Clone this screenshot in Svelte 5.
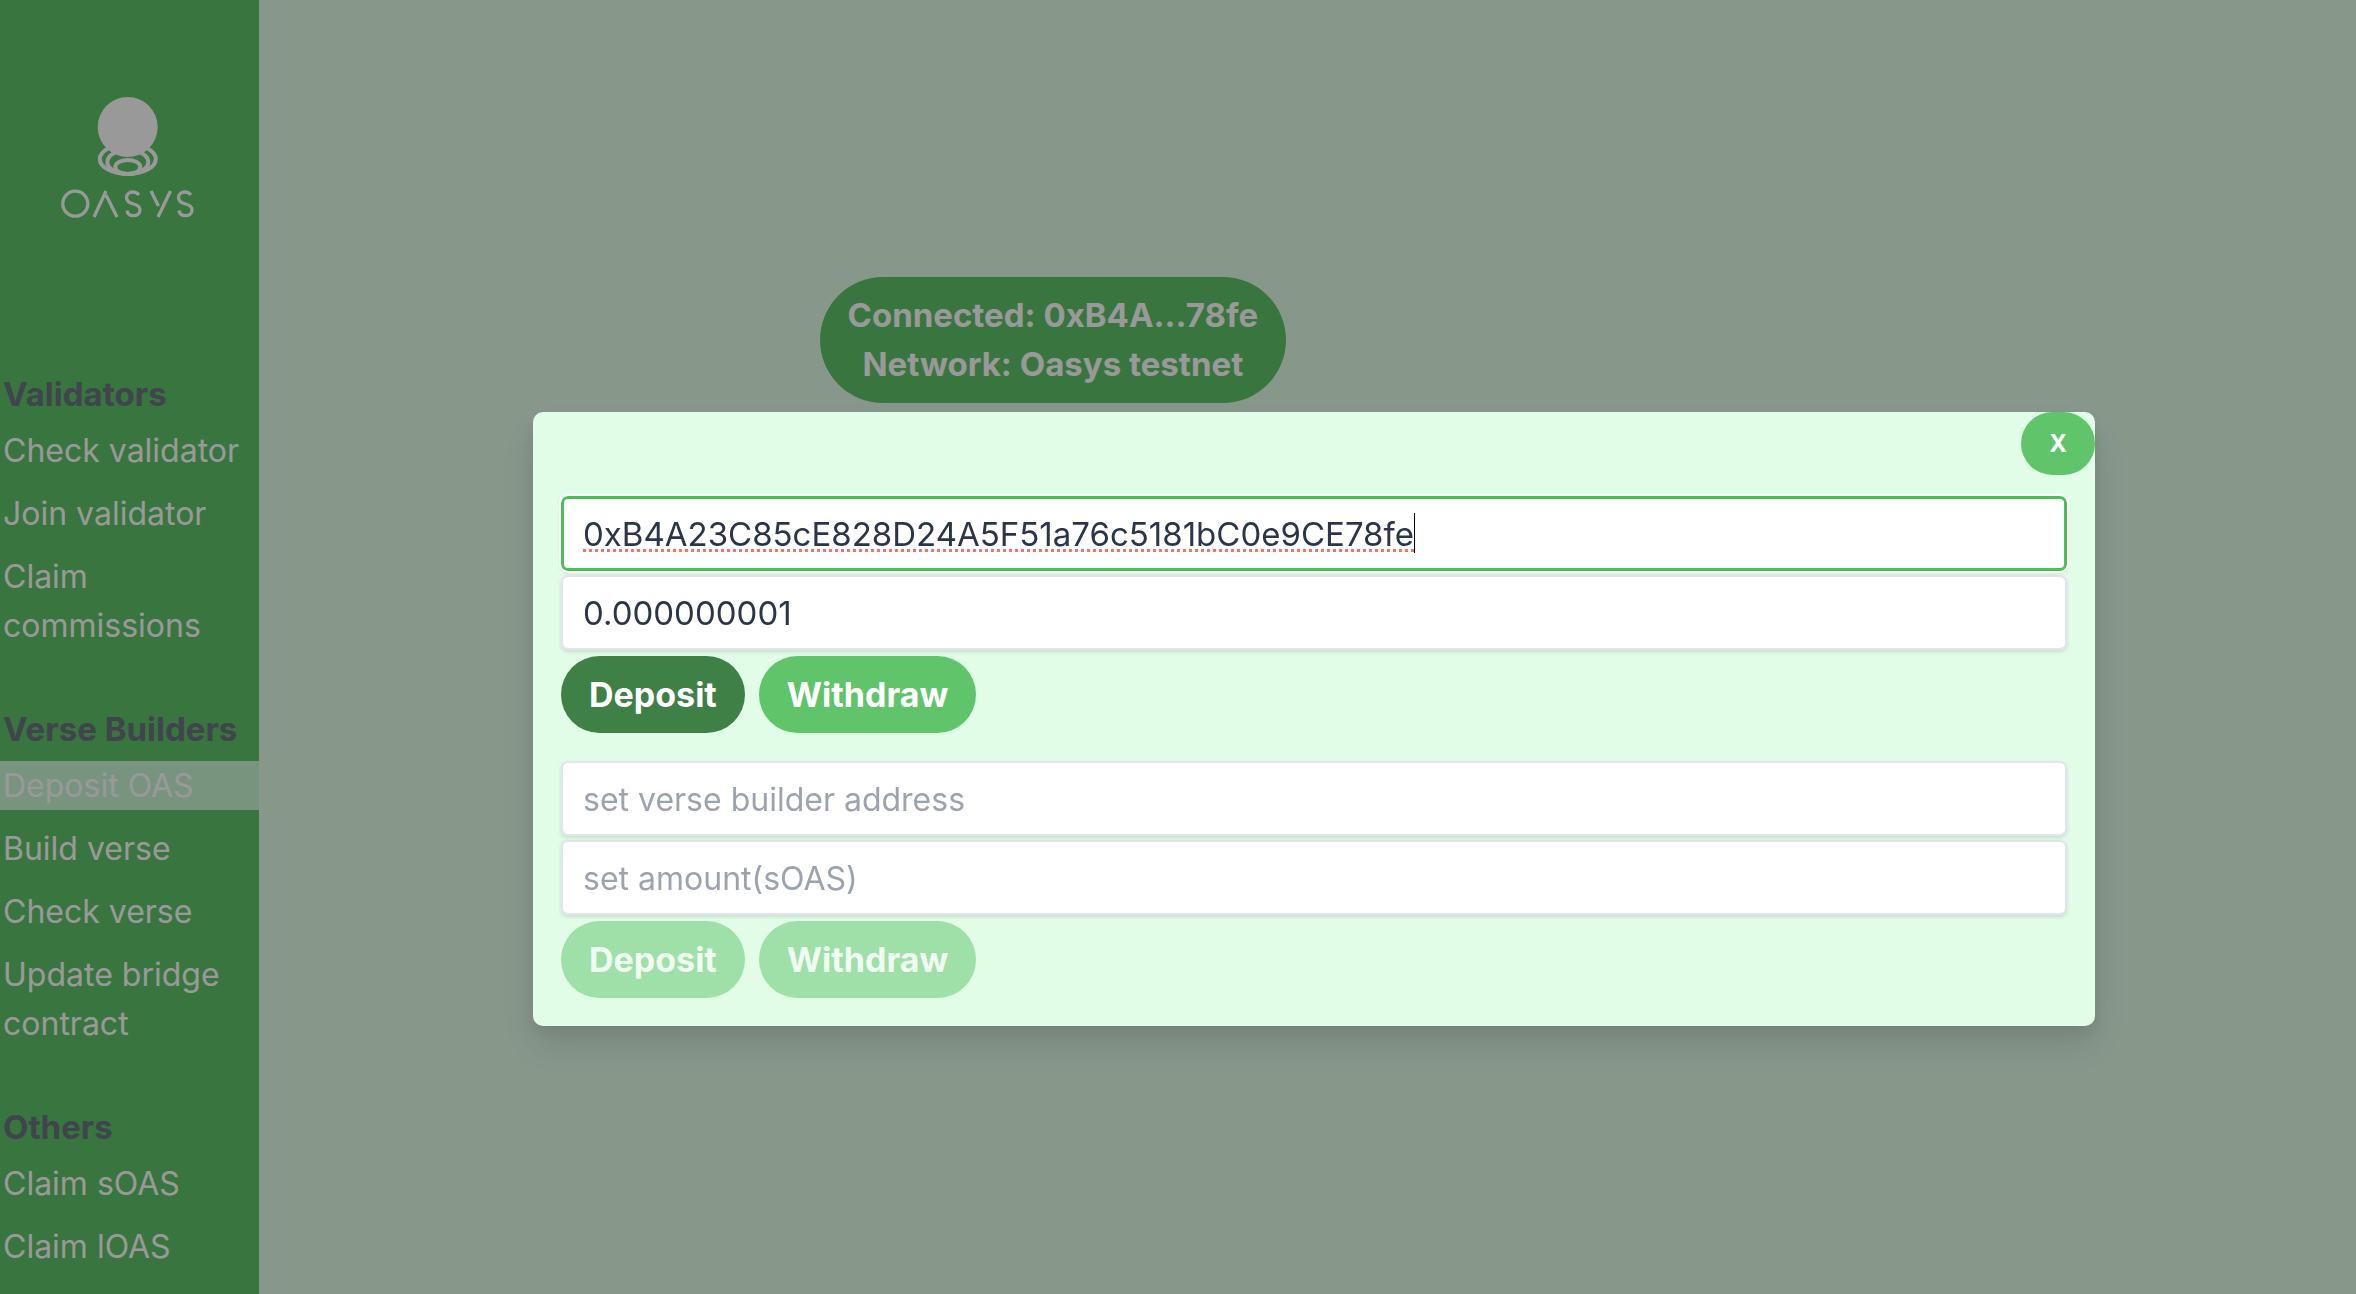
<script lang="ts">
	import { onMount } from 'svelte';

	type MenuItem = { title: string; href: string };
	type MenuGroup = { title: string; items: MenuItem[] };

	const groups: MenuGroup[] = [
		{
			title: 'Validators',
			items: [
				{ title: 'Check validator', href: '#check-validator' },
				{ title: 'Join validator', href: '#join-validator' },
				{ title: 'Claim commissions', href: '#claim-commissions' }
			]
		},
		{
			title: 'Verse Builders',
			items: [
				{ title: 'Deposit OAS', href: '#deposit-oas' },
				{ title: 'Build verse', href: '#build-verse' },
				{ title: 'Check verse', href: '#check-verse' },
				{ title: 'Update bridge contract', href: '#update-bridge' }
			]
		},
		{
			title: 'Others',
			items: [
				{ title: 'Claim sOAS', href: '#claim-soas' },
				{ title: 'Claim lOAS', href: '#claim-loas' }
			]
		}
	];

	let current = $state('#deposit-oas');
	let isOpen = $state(true);
	let forms = $state([
		{ token: 'OAS', builder: '0xB4A23C85cE828D24A5F51a76c5181bC0e9CE78fe', amount: '0.000000001' },
		{ token: 'sOAS', builder: '', amount: '' }
	]);

	let modalElement: HTMLDivElement;
	let focused = $state(-1);
	let caretLeft = $state(0);

	// place the caret bar behind the typed text
	const setCaretPosition = (input: HTMLInputElement) => {
		const context = document.createElement('canvas').getContext('2d');
		if (!context) return;
		const style = getComputedStyle(input);
		context.font = `${style.fontSize} ${style.fontFamily}`;
		const text = input.value.slice(0, input.selectionStart ?? input.value.length);
		caretLeft = Math.round(input.clientLeft + parseInt(style.paddingLeft) + context.measureText(text).width);
	};

	onMount(() => {
		const input = modalElement.querySelector('input');
		if (input) {
			input.focus();
			input.setSelectionRange(input.value.length, input.value.length);
			focused = 0;
			setCaretPosition(input);
		}
	});
</script>

<div class="page">
	<aside class="sidebar">
		<svg class="logo" viewBox="0 0 136 122" role="img" aria-label="Oasys">
			<g fill="none" stroke="currentColor" stroke-width="3.3">
				<circle cx="67.7" cy="30" r="30" fill="currentColor" stroke="none" />
				<ellipse cx="67.8" cy="62" rx="28" ry="15" stroke-width="4" />
				<ellipse cx="67.8" cy="65" rx="20.5" ry="12" stroke-width="4" />
				<ellipse cx="67.8" cy="70" rx="12.5" ry="7" stroke-width="4" />
				<circle cx="15.3" cy="106.7" r="12.5" />
				<path d="M34 120L46 94M46 98L57 120" />
				<path
					d="M79 98C77 95.5 75 95 73 95C69 95 66.5 97.5 66.5 100.5C66.5 104.5 69.5 106 73.5 107C77.5 108 80 109.5 80 113C80 116.5 77 118.7 73.5 118.7C70 118.7 67.5 116.5 67 113.5"
				/>
				<path d="M91 94L98.5 109M110.5 94L98 120" />
				<path
					d="M131 98C129 95.5 127 95 125 95C121 95 118.5 97.5 118.5 100.5C118.5 104.5 121.5 106 125.5 107C129.5 108 132 109.5 132 113C132 116.5 129 118.7 125.5 118.7C122 118.7 119.5 116.5 119 113.5"
				/>
			</g>
		</svg>
		<nav class="menu">
			{#each groups as group}
				<section>
					<h2>{group.title}</h2>
					<ul>
						{#each group.items as item}
							<li>
								<a
									href={item.href}
									class:active={item.href === current}
									onclick={() => (current = item.href)}
								>
									{item.title}
								</a>
							</li>
						{/each}
					</ul>
				</section>
			{/each}
		</nav>
	</aside>

	<main>
		<div class="wallet">
			<button class="connection" type="button">
				Connected: 0xB4A...78fe<br />
				Network: Oasys testnet
			</button>
		</div>
	</main>
</div>

{#if isOpen}
	<div class="overlay">
		<div class="modal" role="dialog" aria-modal="true" aria-label="Deposit OAS" bind:this={modalElement}>
			<button class="close" type="button" onclick={() => (isOpen = false)}>X</button>
			<div class="forms">
				{#each forms as form, index}
					<form onsubmit={(e) => e.preventDefault()}>
						<div class="field">
							<input
								type="text"
								class="address"
								aria-label="verse builder address"
								placeholder="set verse builder address"
								spellcheck="false"
								bind:value={form.builder}
								onfocus={() => (focused = index)}
								onblur={() => (focused = -1)}
								onselect={(e) => setCaretPosition(e.currentTarget)}
								onkeyup={(e) => setCaretPosition(e.currentTarget)}
								onclick={(e) => setCaretPosition(e.currentTarget)}
							/>
							{#if focused === index}
								<span class="caret" style="left: {caretLeft}px"></span>
							{/if}
						</div>
						<input
							type="text"
							aria-label="amount({form.token})"
							placeholder="set amount({form.token})"
							bind:value={form.amount}
						/>
						<div class="actions">
							<button class="deposit" type="submit" disabled={!form.builder || !form.amount}>Deposit</button>
							<button type="button" disabled={!form.builder || !form.amount}>Withdraw</button>
						</div>
					</form>
				{/each}
			</div>
		</div>
	</div>
{/if}

<style>
	:global(body) {
		margin: 0;
		background: #e1fce7;
	}

	.page,
	.overlay {
		font-family: Inter, 'Liberation Sans', sans-serif;
		font-size: 32px;
		line-height: 49px;
	}

	.page {
		display: flex;
		min-height: 100vh;
	}

	.sidebar {
		box-sizing: border-box;
		flex: none;
		width: 11%;
		padding: 97px 0 24px;
		background: #5fc369;
		color: white;
	}

	.logo {
		display: block;
		width: 136px;
		margin-left: 60px;
	}

	.menu {
		display: flex;
		flex-direction: column;
		gap: 55px;
		margin-top: 151px;
	}

	h2 {
		margin: 0 0 7px;
		padding-left: 3px;
		font-size: 33px;
		font-weight: 700;
		line-height: 49px;
		color: #6b7280;
		white-space: nowrap;
	}

	ul {
		display: flex;
		flex-direction: column;
		gap: 14px;
		margin: 0;
		padding: 0;
		list-style: none;
	}

	a {
		display: block;
		padding-left: 3px;
		color: inherit;
		text-decoration: none;
	}

	.active {
		background: #c8f7d4;
	}

	main {
		flex: 1;
		padding-top: 277px;
	}

	.wallet {
		display: flex;
		justify-content: center;
		width: 75.7%;
	}

	button {
		padding: 14px 28px;
		border: none;
		border-radius: 9999px;
		background: #5fc46a;
		color: white;
		font: inherit;
		font-size: 34px;
		font-weight: 700;
		cursor: pointer;
	}

	.connection {
		font-size: 33px;
	}

	.overlay {
		box-sizing: border-box;
		position: fixed;
		inset: 0;
		padding: 412px 261px 0 533px;
		background: rgba(0, 0, 0, 0.4);
	}

	.modal {
		display: flex;
		flex-direction: column;
		border-radius: 10px;
		background: #e1fce7;
		box-shadow:
			0 20px 40px rgba(0, 0, 0, 0.1),
			0 8px 16px rgba(0, 0, 0, 0.08);
	}

	.close {
		align-self: flex-end;
		font-size: 24px;
		line-height: 35px;
	}

	.forms {
		display: flex;
		flex-direction: column;
		gap: 28px;
		padding: 21px 28px 28px;
	}

	form {
		display: flex;
		flex-direction: column;
		gap: 4px;
	}

	.field {
		display: grid;
		position: relative;
	}

	input {
		box-sizing: border-box;
		height: 75px;
		padding: 0 20px;
		border: 2px solid #e2e5ee;
		border-radius: 7px;
		background: white;
		box-shadow: 0 2px 4px rgba(0, 0, 0, 0.12);
		color: #2a3648;
		font: inherit;
		font-size: 33px;
	}

	input::placeholder {
		color: #9ca3af;
		font-size: 32px;
	}

	input:focus {
		border: 3px solid #4dbd5b;
		padding: 0 19px;
		outline: 2px solid white;
	}

	.address:focus {
		caret-color: transparent;
		text-decoration: underline dotted #ff6f61 3px;
		text-underline-offset: 3px;
		text-decoration-skip-ink: none;
	}

	.caret {
		position: absolute;
		top: 17px;
		width: 1px;
		height: 40px;
		background: black;
		pointer-events: none;
	}

	.actions {
		display: flex;
		gap: 14px;
		margin-top: 2px;
	}

	.deposit:enabled {
		background: #3e8045;
	}

	button:disabled {
		opacity: 0.5;
		cursor: default;
	}
</style>
